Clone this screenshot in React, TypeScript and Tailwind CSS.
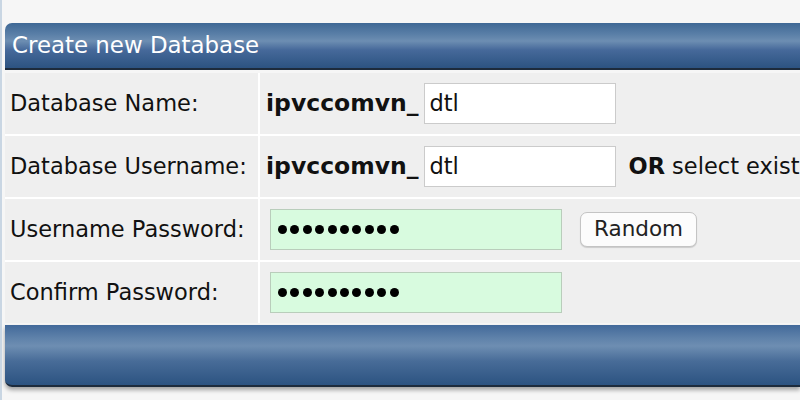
import React from "react";

const font = { fontFamily: '"DejaVu Sans", Verdana, sans-serif' };

function Dots() {
  return (
    <div className="flex items-center gap-[3.4px]">
      {Array.from({ length: 10 }).map((_, i) => (
        <span key={i} className="block w-[9px] h-[9px] rounded-full bg-black" />
      ))}
    </div>
  );
}

export default function App() {
  return (
    <div
      className="w-[800px] h-[400px] overflow-hidden bg-[#f6f6f6] text-[#111] border-l-[2px] border-[#c9d6e3] pl-[3px] pt-[23px]"
      style={font}
    >
      <div className="h-[47px] rounded-tl-[7px] bg-[linear-gradient(to_bottom,#3f6895_0%,#5a7fa7_25%,#6d8eb2_40%,#46699a_60%,#2c5381_100%)] border-b-[2px] border-[#1d2b3c] flex items-center pl-[7px]">
        <span className="text-white text-[22.9px] leading-none">Create new Database</span>
      </div>
      <div className="mt-[3px] grid grid-cols-[253px_1fr] gap-[2px] bg-white">
        <div className="h-[61px] bg-[#efefef] flex items-center pl-[5px] text-[22.5px]">Database Name:</div>
        <div className="h-[61px] bg-[#efefef] flex items-center pl-[6px] text-[22.5px] whitespace-nowrap">
          <span className="font-bold text-[23.5px]">ipvccomvn_</span>
          <div className="ml-[5px] w-[192px] h-[41px] bg-white border border-[#cbcbcb] flex items-center pl-[5px]">dtl</div>
        </div>

        <div className="h-[61px] bg-[#efefef] flex items-center pl-[5px] text-[22.5px] whitespace-nowrap">Database Username:</div>
        <div className="h-[61px] bg-[#efefef] flex items-center pl-[6px] text-[22.5px] whitespace-nowrap overflow-hidden">
          <span className="font-bold text-[23.5px]">ipvccomvn_</span>
          <div className="ml-[5px] w-[192px] h-[41px] bg-white border border-[#cbcbcb] flex items-center pl-[5px] shrink-0">dtl</div>
          <span className="ml-[13px]"><b>OR</b> select existing user</span>
        </div>

        <div className="h-[61px] bg-[#efefef] flex items-center pl-[5px] text-[22.5px] whitespace-nowrap">Username Password:</div>
        <div className="h-[61px] bg-[#efefef] flex items-center pl-[10px] text-[22.5px]">
          <div className="w-[292px] h-[41px] bg-[#d8fbdf] border border-[#b9cdbb] flex items-center pl-[7px]">
            <Dots />
          </div>
          <button className="ml-[18px] w-[117px] h-[35px] rounded-[7px] bg-[#fcfcfc] border border-[#c4c4c4] shadow-[0_1px_1px_rgba(0,0,0,0.15)] text-[21.5px] text-[#222] flex items-center justify-center">
            Random
          </button>
        </div>

        <div className="h-[61px] bg-[#efefef] flex items-center pl-[5px] text-[22.5px] whitespace-nowrap">Confirm Password:</div>
        <div className="h-[61px] bg-[#efefef] flex items-center pl-[10px] text-[22.5px]">
          <div className="w-[292px] h-[41px] bg-[#d8fbdf] border border-[#b9cdbb] flex items-center pl-[7px]">
            <Dots />
          </div>
        </div>
      </div>
      <div className="mt-[2px] h-[62px] rounded-bl-[7px] bg-[linear-gradient(to_bottom,#42699a_0%,#5f82aa_22%,#6e8eb2_35%,#486c98_60%,#2c5381_100%)] border-b-[2px] border-[#1d2b3c] shadow-[0_3px_4px_rgba(0,0,0,0.35)]" />
    </div>
  );
}
